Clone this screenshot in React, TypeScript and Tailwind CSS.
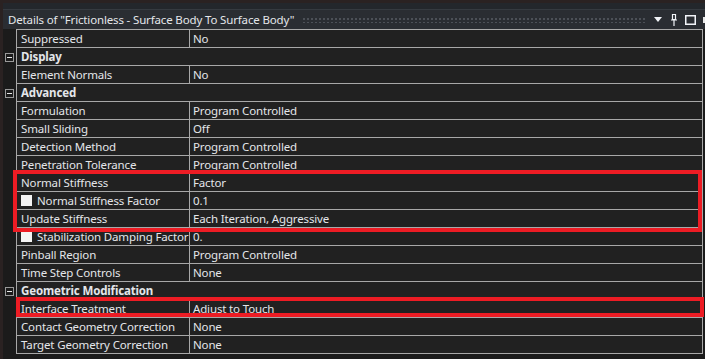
import React from "react";

type Row =
  | { kind: "group"; label: string }
  | { kind: "prop"; label: string; value: string; check?: boolean };

const rows: Row[] = [
  { kind: "prop", label: "Suppressed", value: "No" },
  { kind: "group", label: "Display" },
  { kind: "prop", label: "Element Normals", value: "No" },
  { kind: "group", label: "Advanced" },
  { kind: "prop", label: "Formulation", value: "Program Controlled" },
  { kind: "prop", label: "Small Sliding", value: "Off" },
  { kind: "prop", label: "Detection Method", value: "Program Controlled" },
  { kind: "prop", label: "Penetration Tolerance", value: "Program Controlled" },
  { kind: "prop", label: "Normal Stiffness", value: "Factor" },
  { kind: "prop", label: "Normal Stiffness Factor", value: "0.1", check: true },
  { kind: "prop", label: "Update Stiffness", value: "Each Iteration, Aggressive" },
  { kind: "prop", label: "Stabilization Damping Factor", value: "0.", check: true },
  { kind: "prop", label: "Pinball Region", value: "Program Controlled" },
  { kind: "prop", label: "Time Step Controls", value: "None" },
  { kind: "group", label: "Geometric Modification" },
  { kind: "prop", label: "Interface Treatment", value: "Adjust to Touch" },
  { kind: "prop", label: "Contact Geometry Correction", value: "None" },
  { kind: "prop", label: "Target Geometry Correction", value: "None" },
];

function MinusBox() {
  return (
    <div className="flex h-[9px] w-[9px] items-center justify-center border border-[#9a9a9a] bg-[#1b1b1b]">
      <div className="h-px w-[5px] bg-[#e8e8e8]" />
    </div>
  );
}

export default function App() {
  return (
    <div className="relative flex h-[359px] w-[705px] overflow-hidden bg-[#1b1b1b] font-['Noto_Sans',sans-serif] text-[11.5px] tracking-[-0.15px] text-[#e4e6ea]">
      {/* left window edge */}
      <div className="w-[3px] shrink-0 bg-[#2a2222]" />

      <div className="flex min-w-0 flex-1 flex-col">
        {/* top strip */}
        <div className="h-[3px] bg-[#2a2222]" />
        <div className="h-[6px] bg-[#23272c]" />
        <div className="h-px bg-[#353a40]" />

        {/* title bar */}
        <div className="flex h-[19px] items-center bg-[#2a2d32] pl-[5px]">
          <span className="whitespace-nowrap leading-none">
            Details of "Frictionless - Surface Body To Surface Body"
          </span>
          <div className="mr-[6px] ml-[8px] h-[6px] flex-1 bg-[radial-gradient(circle,#4c5057_0.8px,transparent_1.2px)] bg-[length:4px_4px]" />
          <svg width="8" height="5" viewBox="0 0 8 5" className="mr-[9px] ml-[2px]">
            <path d="M0 0h8L4 5z" fill="#f2f4f8" />
          </svg>
          <svg width="6" height="12" viewBox="0 0 6 12" className="mr-[8px]">
            <path d="M1.5 0.5h3v5h-3z M0 6h6 M3 6v6" stroke="#f2f4f8" strokeWidth="1.2" fill="none" />
          </svg>
          <svg width="11" height="10" viewBox="0 0 11 10" className="mr-[7px]">
            <rect x="0.75" y="0.75" width="9.5" height="8.5" stroke="#f2f4f8" strokeWidth="1.5" fill="none" />
          </svg>
          <div className="h-[6px] w-[2px] bg-[#e8e8e8]" />
        </div>

        {/* body */}
        <div className="flex">
          {/* gutter */}
          <div className="flex w-[13px] shrink-0 flex-col pt-px">
            {rows.map((r, i) => (
              <div key={i} className="flex h-[18px] items-center pl-[2px]">
                {r.kind === "group" && <MinusBox />}
              </div>
            ))}
          </div>

          {/* property grid */}
          <div className="w-[687px] border-x border-t border-[#a8a8a8] bg-[#212121]">
            {rows.map((r, i) =>
              r.kind === "group" ? (
                <div
                  key={i}
                  className="flex h-[18px] items-center border-b border-[#a8a8a8] pl-[4px] font-bold"
                >
                  {r.label}
                </div>
              ) : (
                <div key={i} className="flex h-[18px] border-b border-[#a8a8a8]">
                  <div className="flex w-[172px] shrink-0 items-center gap-[5px] overflow-hidden whitespace-nowrap pl-[4px]">
                    {r.check && <div className="h-[11px] w-[11px] shrink-0 bg-[#f4f4f4]" />}
                    {r.label}
                  </div>
                  <div className="flex flex-1 items-center whitespace-nowrap border-l border-[#a8a8a8] pl-[3px]">
                    {r.value}
                  </div>
                </div>
              )
            )}
          </div>
        </div>
      </div>

      {/* annotation boxes */}
      <div className="absolute left-[13px] top-[170px] h-[62px] w-[689px] border-4 border-[#ed1c24]" />
      <div className="absolute left-[16px] top-[297px] h-[20px] w-[688px] border-4 border-[#ed1c24]" />
    </div>
  );
}
